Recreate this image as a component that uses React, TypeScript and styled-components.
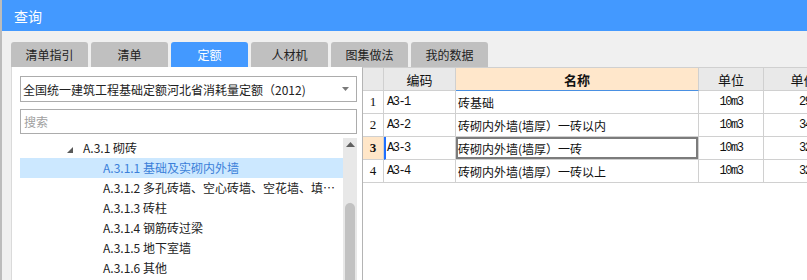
import { Fragment } from "react";
import styled, { createGlobalStyle } from "styled-components";

const GlobalStyle = createGlobalStyle`
  html, body {
    margin: 0;
    padding: 0;
    background: #fff;
    overflow: hidden;
  }
  body {
    font-family: "Noto Sans CJK SC", "Noto Sans", sans-serif;
  }
`;

const cjk = `"Noto Sans CJK SC", "Noto Sans", sans-serif`;
const mono = `"Liberation Mono", "DejaVu Sans Mono", monospace`;

const Window = styled.div`
  width: 807px;
  height: 280px;
  box-sizing: border-box;
  border-left: 2px solid #bcbcbc;
  display: flex;
  flex-direction: column;
  font-family: ${cjk};
`;

const TitleBar = styled.div`
  height: 31px;
  flex: none;
  background: #4399ff;
  color: #fff;
  font-size: 14px;
  padding-left: 12px;
  display: flex;
  align-items: center;
`;

const Body = styled.div`
  flex: 1;
  min-height: 0;
  background: #f0f0f0;
  display: flex;
  flex-direction: column;
  padding-top: 11px;
`;

const TabRow = styled.div`
  display: flex;
  gap: 3px;
  padding-left: 9px;
  height: 25px;
  flex: none;
`;

const Tab = styled.div<{ $active?: boolean }>`
  width: 77px;
  height: 25px;
  border-radius: 3px 3px 0 0;
  background: ${(p) => (p.$active ? "#4399ff" : "#c0c0c0")};
  color: ${(p) => (p.$active ? "#fff" : "#222")};
  font-size: 12px;
  display: flex;
  align-items: center;
  justify-content: center;
`;

const Main = styled.div`
  flex: 1;
  min-height: 0;
  display: flex;
  padding-left: 9px;
`;

const LeftPanel = styled.div`
  width: 351px;
  flex: none;
  box-sizing: border-box;
  background: #fff;
  border-left: 1px solid #dadada;
  padding: 9px 5px 0 8px;
  display: flex;
  flex-direction: column;
`;

const Select = styled.div`
  height: 26px;
  flex: none;
  box-sizing: border-box;
  border: 1px solid #acacac;
  padding: 0 7px 0 2px;
  display: flex;
  align-items: center;
  justify-content: space-between;
  font-size: 12px;
  color: #222;
`;

const Search = styled.input`
  margin-top: 7px;
  height: 25px;
  flex: none;
  box-sizing: border-box;
  border: 1px solid #acacac;
  padding: 0 0 0 3px;
  font-family: ${cjk};
  font-size: 12px;
  outline: none;
  &::placeholder {
    color: #a0a0a0;
  }
`;

const TreeArea = styled.div`
  margin-top: 4px;
  flex: 1;
  min-height: 0;
  display: flex;
`;

const TreeList = styled.div`
  flex: 1;
  min-width: 0;
  overflow: hidden;
`;

const TreeRow = styled.div<{ $indent: number; $selected?: boolean }>`
  height: 20px;
  line-height: 20px;
  padding-left: ${(p) => p.$indent}px;
  padding-right: 6px;
  font-size: 12px;
  color: ${(p) => (p.$selected ? "#3b7fd9" : "#222")};
  background: ${(p) => (p.$selected ? "#cce8ff" : "transparent")};
  white-space: nowrap;
  overflow: hidden;
  text-overflow: ellipsis;
`;

const Caret = styled.span`
  display: inline-block;
  width: 16px;
`;

const Scrollbar = styled.div`
  width: 14px;
  flex: none;
  background: #e8e8e8;
  display: flex;
  flex-direction: column;
  align-items: center;
  padding-top: 4px;
  box-sizing: border-box;
`;

const Thumb = styled.div`
  margin-top: 56px;
  flex: 1;
  width: 10px;
  border-radius: 5px 5px 0 0;
  background: #c2c2c2;
`;

const GridPanel = styled.div`
  flex: 1;
  min-width: 0;
  background: #fff;
  border-left: 1px solid #b4b4b4;
  border-top: 1px solid #d0d0d0;
  overflow: hidden;
`;

const Grid = styled.div`
  display: grid;
  grid-template-columns: 21px 72px 243px 65px 80px;
  grid-auto-rows: 23px;
`;

const Cell = styled.div`
  box-sizing: border-box;
  border-right: 1px solid #d0d0d0;
  border-bottom: 1px solid #d0d0d0;
  display: flex;
  align-items: center;
  white-space: nowrap;
  overflow: hidden;
  color: #111;
`;

const HeadCell = styled(Cell)<{ $hot?: boolean }>`
  justify-content: center;
  font-size: 13px;
  background: ${(p) => (p.$hot ? "#ffe7cb" : "#e9e9e9")};
  font-weight: ${(p) => (p.$hot ? 700 : 400)};
  border-bottom: 1px solid ${(p) => (p.$hot ? "#4a90e2" : "#d0d0d0")};
`;

const NumCell = styled(Cell)<{ $current?: boolean }>`
  justify-content: center;
  font-family: "Liberation Serif", serif;
  font-size: 13px;
  background: ${(p) => (p.$current ? "#ffe6c8" : "#fff")};
  font-weight: ${(p) => (p.$current ? 700 : 400)};
`;

const CodeCell = styled(Cell)<{ $current?: boolean }>`
  font-family: ${mono};
  font-size: 12px;
  letter-spacing: -1.5px;
  padding-left: ${(p) => (p.$current ? 1 : 3)}px;
  border-left: ${(p) => (p.$current ? "2px solid #1f6fff" : "none")};
`;

const NameCell = styled(Cell)<{ $current?: boolean }>`
  font-size: 12px;
  padding-left: 2px;
  box-shadow: ${(p) => (p.$current ? "inset 0 0 0 2px #7c7c7c" : "none")};
`;

const UnitCell = styled(Cell)<{ $align: string }>`
  justify-content: ${(p) => p.$align};
  font-family: ${mono};
  font-size: 12px;
  letter-spacing: -1.5px;
  padding: 0 4px;
`;

const rows = [
  { code: "A3-1", name: "砖基础", unit: "10m3", price: "2936.43" },
  { code: "A3-2", name: "砖砌内外墙(墙厚）一砖以内", unit: "10m3", price: "3461.58" },
  { code: "A3-3", name: "砖砌内外墙(墙厚）一砖", unit: "10m3", price: "3286.12" },
  { code: "A3-4", name: "砖砌内外墙(墙厚）一砖以上", unit: "10m3", price: "3250.89" },
];

const tabs = ["清单指引", "清单", "定额", "人材机", "图集做法", "我的数据"];

const children = [
  "A.3.1.1 基础及实砌内外墙",
  "A.3.1.2 多孔砖墙、空心砖墙、空花墙、填充墙",
  "A.3.1.3 砖柱",
  "A.3.1.4 钢筋砖过梁",
  "A.3.1.5 地下室墙",
  "A.3.1.6 其他",
];

export default function App() {
  const current = 2;
  return (
    <Window>
      <GlobalStyle />
      <TitleBar>查询</TitleBar>
      <Body>
        <TabRow>
          {tabs.map((t) => (
            <Tab key={t} $active={t === "定额"}>
              {t}
            </Tab>
          ))}
        </TabRow>
        <Main>
          <LeftPanel>
            <Select>
              <span>全国统一建筑工程基础定额河北省消耗量定额（2012)</span>
              <svg width="7" height="4" viewBox="0 0 7 4">
                <polygon points="0,0 7,0 3.5,4" fill="#7a7a7a" />
              </svg>
            </Select>
            <Search placeholder="搜索" />
            <TreeArea>
              <TreeList>
                <TreeRow $indent={47}>
                  <Caret>
                    <svg width="6" height="6" viewBox="0 0 6 6">
                      <polygon points="6,0 6,6 0,6" fill="#595959" />
                    </svg>
                  </Caret>
                  A.3.1 砌砖
                </TreeRow>
                {children.map((c, i) => (
                  <TreeRow key={c} $indent={83} $selected={i === 0}>
                    {c}
                  </TreeRow>
                ))}
              </TreeList>
              <Scrollbar>
                <svg width="9" height="5" viewBox="0 0 9 5">
                  <polygon points="0,5 9,5 4.5,0" fill="#606060" />
                </svg>
                <Thumb />
              </Scrollbar>
            </TreeArea>
          </LeftPanel>
          <GridPanel>
            <Grid>
              <HeadCell />
              <HeadCell>编码</HeadCell>
              <HeadCell $hot>名称</HeadCell>
              <HeadCell>单位</HeadCell>
              <HeadCell>单价</HeadCell>
              {rows.map((r, i) => (
                <Fragment key={r.code}>
                  <NumCell $current={i === current}>{i + 1}</NumCell>
                  <CodeCell $current={i === current}>{r.code}</CodeCell>
                  <NameCell $current={i === current}>{r.name}</NameCell>
                  <UnitCell $align="center">{r.unit}</UnitCell>
                  <UnitCell $align="flex-end">{r.price}</UnitCell>
                </Fragment>
              ))}
            </Grid>
          </GridPanel>
        </Main>
      </Body>
    </Window>
  );
}
